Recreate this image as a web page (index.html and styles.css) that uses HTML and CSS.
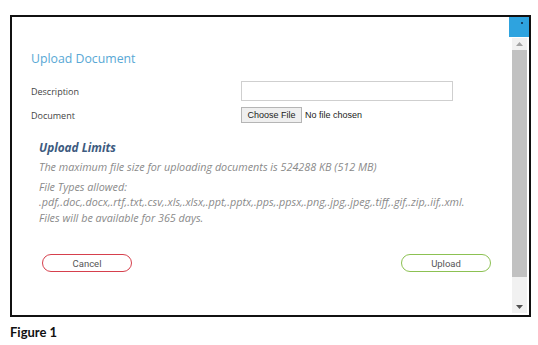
FILE: index.html
```html
<!DOCTYPE html>
<html lang="en">

<head>
    <meta charset="UTF-8">
    <meta name="viewport" content="width=device-width, initial-scale=1.0">
    <title>Upload Document</title>
    <link rel="stylesheet" href="styles.css">
</head>

<body>
    <div class="frame">
        <div class="modal">
            <h2 class="title">Upload Document</h2>

            <form id="uploadForm">
                <div class="row">
                    <label for="description">Description</label>
                    <input type="text" id="description" name="description" class="field">
                </div>
                <div class="row row-file">
                    <label for="document">Document</label>
                    <div class="file">
                        <span class="file-btn">Choose File</span>
                        <span class="file-name">No file chosen</span>
                    </div>
                </div>

                <div class="limits">
                    <h3>Upload Limits</h3>
                    <p>The maximum file size for uploading documents is 524288 KB (512 MB)</p>
                    <p class="types">File Types allowed:<br>.pdf,.doc,.docx,.rtf,.txt,.csv,.xls,.xlsx,.ppt,.pptx,.pps,.ppsx,.png,.jpg,.jpeg,.tiff,.gif,.zip,.iif,.xml.</p>
                    <p class="days">Files will be available for 365 days.</p>
                </div>

                <div class="actions">
                    <button type="button" class="btn btn-cancel">Cancel</button>
                    <button type="submit" class="btn btn-upload">Upload</button>
                </div>
            </form>
        </div>

        <!-- close box and scrollbar -->
        <div class="side">
            <div class="close"><span class="dot"></span></div>
            <div class="track">
                <div class="arrow">
                    <svg width="7" height="4" viewBox="0 0 7 4"><path d="M0 4 L3.5 0 L7 4 Z" fill="#a3a3a3"/></svg>
                </div>
                <div class="thumb"></div>
                <div class="rest"></div>
                <div class="arrow">
                    <svg width="7" height="4" viewBox="0 0 7 4"><path d="M0 0 L3.5 4 L7 0 Z" fill="#505050"/></svg>
                </div>
            </div>
        </div>
    </div>

    <p class="caption">Figure 1</p>
</body>

</html>
```

FILE: styles.css
```css
body {
    margin: 0;
    background-color: #ffffff;
    font-family: "Open Sans", sans-serif;
}

.frame {
    margin: 15px 0 0 10px;
    width: 517px;
    height: 298px;
    border: 2px solid #111111;
    display: flex;
}

.modal {
    flex: 1;
    padding: 34px 0 0 19px;
}

.title {
    margin: 0;
    font-size: 12.3px;
    line-height: 16px;
    font-weight: 400;
    color: #58a8d5;
}

.row {
    display: flex;
    align-items: center;
    margin-top: 14px;
}

.row label {
    width: 210px;
    font-size: 9px;
    color: #444444;
}

.field {
    box-sizing: border-box;
    width: 212px;
    height: 20px;
    margin: 0;
    border: 1px solid #cfcfcf;
}

.row-file {
    margin-top: 6px;
}

.file {
    display: flex;
    align-items: center;
    font-family: "Liberation Sans", Arial, sans-serif;
    font-size: 9px;
    color: #222222;
}

.file-btn {
    box-sizing: border-box;
    width: 61px;
    height: 16px;
    line-height: 14px;
    text-align: center;
    border: 1px solid #b5b5b5;
    background-color: #efefef;
}

.file-name {
    margin-left: 3px;
}

.limits {
    margin: 17px 0 0 8px;
}

.limits h3 {
    margin: 0;
    font-size: 11.8px;
    line-height: 14px;
    font-style: italic;
    font-weight: 700;
    color: #3d5b80;
}

.limits p {
    margin: 6px 0 0;
    font-size: 10.8px;
    line-height: 13px;
    font-style: italic;
    color: #8a8a8a;
}

.limits .types {
    margin-top: 6px;
    line-height: 15px;
}

.limits .days {
    margin-top: 2px;
}

.actions {
    display: flex;
    justify-content: space-between;
    margin: 30px 18px 0 11px;
}

.btn {
    box-sizing: border-box;
    width: 90px;
    height: 18px;
    padding: 0;
    border-radius: 9px;
    background-color: #ffffff;
    font-family: Roboto, sans-serif;
    font-size: 9.5px;
    color: #555555;
    cursor: pointer;
}

.btn-cancel {
    border: 1.5px solid #d6404d;
}

.btn-upload {
    border: 1.5px solid #8cc152;
}

.side {
    width: 20px;
    display: flex;
    flex-direction: column;
}

.close {
    height: 20px;
    background-color: #2ea3df;
    position: relative;
}

.dot {
    position: absolute;
    top: 5px;
    left: 12px;
    width: 2px;
    height: 2px;
    background-color: #17456a;
}

.track {
    flex: 1;
    margin: 1px 2px 2px 3px;
    background-color: #f1f1f1;
    display: flex;
    flex-direction: column;
}

.arrow {
    height: 12px;
    display: flex;
    align-items: center;
    justify-content: center;
}

.thumb {
    height: 227px;
    background-color: #c1c1c1;
}

.rest {
    flex: 1;
}

.caption {
    margin: 7px 0 0 10px;
    font-family: Lato, sans-serif;
    font-weight: 700;
    font-size: 13px;
    color: #111111;
}
```
